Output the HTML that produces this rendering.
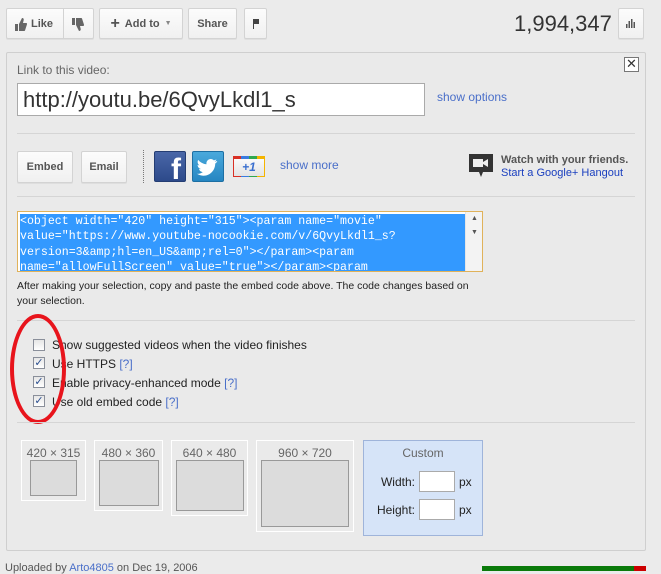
<!DOCTYPE html>
<html><head><meta charset="utf-8"><style>
*{box-sizing:border-box;margin:0;padding:0}
body{width:661px;height:571px;background:#ebebeb;font-family:"Liberation Sans",Arial,sans-serif;position:relative;overflow:hidden;color:#333}
.a{position:absolute}
.btn{position:absolute;border:1px solid #d3d3d3;border-radius:2px;background:linear-gradient(#fcfcfc,#f0f0f0);box-shadow:0 1px 0 rgba(0,0,0,.05);font-size:11px;font-weight:bold;color:#555;display:flex;align-items:center;justify-content:center}
.hr{position:absolute;left:17px;width:618px;height:1px;background:#d5d5d5}
.lnk{color:#4a6fc9}
.cb{position:absolute;left:33px;width:12px;height:12px;border:1px solid #8a8f9a;background:linear-gradient(#e6e6e6,#fff);font-size:11px;line-height:10px;text-align:center;color:#2a4e8f}
.cl{position:absolute;left:52px;font-size:12px;color:#222}
.sz{position:absolute;border:1px solid #fff;font-size:12px;color:#666;text-align:center;padding-top:5px}
.sz div{position:absolute;background:#dcdcdc;border:1px solid #999}
</style></head><body>
<div class="btn" style="left:6px;top:8px;width:88px;height:31px;justify-content:flex-start">
 <svg class="a" style="left:8px;top:9px" width="12" height="13" viewBox="0 0 12 13"><path d="M0 6h3v7H0zM4 6l3-6c1.5 0 2 1 1.6 2.5L8 5h3.2c.8 0 1 1 .7 1.6L10 12.5c-.2.4-.6.5-1 .5H4z" fill="#666"/></svg>
 <span class="a" style="left:24px;top:9px">Like</span>
 <div class="a" style="left:56px;top:0;width:1px;height:29px;background:#d3d3d3"></div>
 <svg class="a" style="left:65px;top:9px" width="12" height="13" viewBox="0 0 12 13"><path d="M0 0h3v7H0zM4 7l3 6c1.5 0 2-1 1.6-2.5L8 8h3.2c.8 0 1-1 .7-1.6L10 .5C9.8.1 9.4 0 9 0H4z" fill="#666"/></svg>
</div>
<div class="btn" style="left:99px;top:8px;width:84px;height:31px"><span style="font-size:16px;margin-right:5px;font-weight:bold">+</span>Add to <span style="font-size:7px;margin-left:5px;color:#888">▼</span></div>
<div class="btn" style="left:188px;top:8px;width:49px;height:31px">Share</div>
<div class="btn" style="left:244px;top:8px;width:23px;height:31px"><svg width="6" height="10"><path d="M0 0h1v10H0zM1 0h5v5H1z" fill="#444"/></svg></div>
<div class="a" style="left:514px;top:11px;font-size:22px;color:#333">1,994,347</div>
<div class="btn" style="left:618px;top:8px;width:26px;height:31px"><svg width="10" height="9"><path d="M0 5h1.5v4H0zM2.5 2h1.5v7H2.5zM5 0h1.5v9H5zM7.5 3H9v6H7.5z" fill="#555"/></svg></div>

<div class="a" style="left:6px;top:52px;width:640px;height:499px;border:1px solid #cfcfcf;border-radius:2px;background:#eaeaea"></div>
<div class="a" style="left:17px;top:63px;font-size:12px;color:#666">Link to this video:</div>
<div class="a" style="left:624px;top:57px;width:15px;height:15px;border:1px solid #777;background:#fff;font-size:13px;line-height:12px;text-align:center;color:#333">✕</div>
<div class="a" style="left:17px;top:83px;width:408px;height:33px;border:1px solid #aaa;background:#fff;font-size:22px;padding:3px 0 0 5px;color:#333">http://youtu.be/6QvyLkdl1_s</div>
<div class="a lnk" style="left:437px;top:90px;font-size:12px">show options</div>
<div class="hr" style="top:133px"></div>

<div class="btn" style="left:17px;top:151px;width:56px;height:32px">Embed</div>
<div class="btn" style="left:81px;top:151px;width:46px;height:32px">Email</div>
<div class="a" style="left:143px;top:150px;height:33px;border-left:1px dotted #777"></div>
<div class="a" style="left:154px;top:151px;width:32px;height:31px;background:linear-gradient(#4a67a8,#2d4a8a);border:1px solid #243d73;border-radius:2px;color:#fff;font-weight:bold;font-size:30px;text-align:right;padding-right:4px;line-height:36px;overflow:hidden">f</div>
<div class="a" style="left:192px;top:151px;width:32px;height:31px;background:linear-gradient(#4aa9dc,#2686c2);border:1px solid #1d6fa3;border-radius:2px;overflow:hidden"><svg width="30" height="29" viewBox="0 0 30 29"><path d="M24 9c-.8.4-1.6.6-2.4.7.9-.5 1.5-1.3 1.8-2.3-.8.5-1.7.8-2.6 1-1.6-1.8-4.5-1.8-6.2 0-1 1-1.4 2.5-1.1 3.9C10.2 12 7.2 10.4 5.2 7.9c-1.1 1.9-.5 4.3 1.3 5.5-.7 0-1.3-.2-1.900-.5 0 2 1.4 3.7 3.3 4.1-.6.2-1.3.2-1.9.1.5 1.7 2.1 2.9 3.9 2.9-1.7 1.4-3.9 2-6 1.8 1.9 1.2 4.1 1.9 6.4 1.9 7.700 0 12-6.4 11.9-12.1.8-.6 1.5-1.3 2-2.1z" fill="#fff"/></svg></div>
<div class="a" style="left:233px;top:156px;width:32px;height:21px;border:1px solid #bbb;background:linear-gradient(#fafafa,#e3e3e3);border-top:3px solid;border-image:linear-gradient(90deg,#d93025 25%,#3a7be0 25% 50%,#2fa84f 50% 75%,#f4b400 75%) 1;font-size:12px;font-weight:bold;color:#3a6fcf;text-align:center;line-height:16px;font-style:italic">+1</div>
<div class="a lnk" style="left:280px;top:158px;font-size:12px">show more</div>
<svg class="a" style="left:469px;top:154px" width="24" height="24" viewBox="0 0 24 24"><path d="M0 0h24v18H14l-2 5-2-5H0z" fill="#333"/><path d="M4 5h10v8H4zM14 8l5-3v8l-5-3z" fill="#eee"/></svg>
<div class="a" style="left:501px;top:154px;font-size:11px;font-weight:bold;color:#555">Watch with your friends.</div>
<div class="a" style="left:501px;top:167px;font-size:11px;color:#1a3fbf">Start a Google+ Hangout</div>
<div class="hr" style="top:196px"></div>

<div class="a" style="left:17px;top:211px;width:466px;height:61px;border:1px solid #e0b25a;background:#fff;overflow:hidden">
 <div class="a" style="left:2px;top:2px;width:446px;height:57px;background:#3399ff;overflow:hidden"></div>
 <div class="a" style="left:2px;top:2px;font-family:'Liberation Mono',monospace;font-size:11.6px;line-height:15.3px;color:#fff;white-space:pre">&lt;object width="420" height="315"&gt;&lt;param name="movie"
value="https://www.youtube-nocookie.com/v/6QvyLkdl1_s?
version=3&amp;amp;hl=en_US&amp;amp;rel=0"&gt;&lt;/param&gt;&lt;param
name="allowFullScreen" value="true"&gt;&lt;/param&gt;&lt;param</div>
 <div class="a" style="left:447px;top:0;width:18px;height:59px;background:#f3f3f3;border-left:1px solid #e5e5e5;font-size:7px;color:#555;text-align:center;line-height:14px">▲<br>▼</div>
</div>
<div class="a" style="left:17px;top:279px;font-size:10.5px;line-height:15px;color:#222;width:470px">After making your selection, copy and paste the embed code above. The code changes based on your selection.</div>
<div class="hr" style="top:320px"></div>

<div class="cb" style="top:339px"></div><div class="cl" style="top:338px">Show suggested videos when the video finishes</div>
<div class="cb" style="top:357px">✓</div><div class="cl" style="top:357px">Use HTTPS <span class="lnk">[?]</span></div>
<div class="cb" style="top:376px">✓</div><div class="cl" style="top:376px">Enable privacy-enhanced mode <span class="lnk">[?]</span></div>
<div class="cb" style="top:395px">✓</div><div class="cl" style="top:395px">Use old embed code <span class="lnk">[?]</span></div>
<div class="a" style="left:10px;top:314px;width:56px;height:110px;border:4px solid #e8141c;border-radius:50%"></div>
<div class="hr" style="top:422px"></div>

<div class="sz" style="left:21px;top:440px;width:65px;height:61px">420 × 315<div style="left:8px;top:19px;width:47px;height:36px"></div></div>
<div class="sz" style="left:94px;top:440px;width:69px;height:71px">480 × 360<div style="left:4px;top:19px;width:60px;height:46px"></div></div>
<div class="sz" style="left:171px;top:440px;width:77px;height:76px">640 × 480<div style="left:4px;top:19px;width:68px;height:51px"></div></div>
<div class="sz" style="left:256px;top:440px;width:98px;height:92px">960 × 720<div style="left:4px;top:19px;width:88px;height:67px"></div></div>
<div class="a" style="left:363px;top:440px;width:120px;height:96px;background:#d6e4f8;border:1px solid #9fb4da;font-size:12px">
 <div class="a" style="left:0;top:5px;width:118px;text-align:center;color:#666">Custom</div>
 <div class="a" style="left:0;top:34px;width:51px;text-align:right;color:#222">Width:</div>
 <div class="a" style="left:55px;top:30px;width:36px;height:21px;background:#fff;border:1px solid #aaa"></div>
 <div class="a" style="left:95px;top:34px;color:#222">px</div>
 <div class="a" style="left:0;top:62px;width:51px;text-align:right;color:#222">Height:</div>
 <div class="a" style="left:55px;top:58px;width:36px;height:21px;background:#fff;border:1px solid #aaa"></div>
 <div class="a" style="left:95px;top:62px;color:#222">px</div>
</div>

<div class="a" style="left:5px;top:562px;font-size:11px;color:#555">Uploaded by <span class="lnk">Arto4805</span> on Dec 19, 2006</div>
<div class="a" style="left:482px;top:566px;width:152px;height:5px;background:#0a7a0a"></div>
<div class="a" style="left:634px;top:566px;width:12px;height:5px;background:#c00"></div>
</body></html>
